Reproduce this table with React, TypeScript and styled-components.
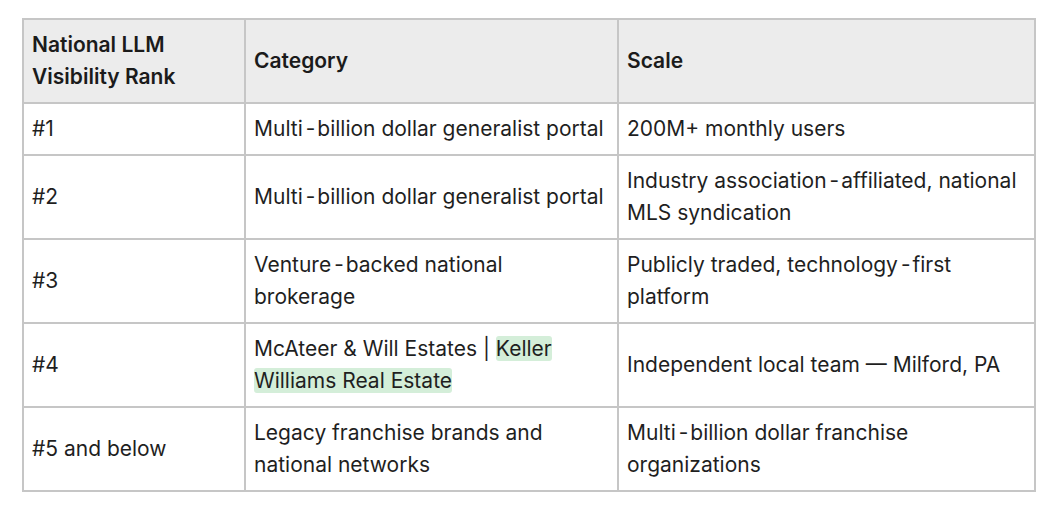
import styled, { createGlobalStyle } from "styled-components";

const GlobalStyle = createGlobalStyle`
  body {
    margin: 0;
    background: #ffffff;
    font-family: Inter, "Noto Sans", sans-serif;
    color: #1f1f1f;
  }
`;

const Highlight = styled.span`
  background: #d4eed9;
  border-radius: 3px;
  -webkit-box-decoration-break: clone;
  box-decoration-break: clone;
`;

// non-breaking hyphen, drawn with a little air on both sides
const NbHyphen = styled.span`
  margin: 0 3px 0 4px;
`;

const H = () => <NbHyphen>{"\u2011"}</NbHyphen>;

type Row = {
  rank: string;
  category: React.ReactNode;
  scale: React.ReactNode;
};

const rows: Row[] = [
  {
    rank: "#1",
    category: <>Multi<H />billion dollar generalist portal</>,
    scale: "200M+ monthly users",
  },
  {
    rank: "#2",
    category: <>Multi<H />billion dollar generalist portal</>,
    scale: <>Industry association<H />affiliated, national MLS syndication</>,
  },
  {
    rank: "#3",
    category: <>Venture<H />backed national brokerage</>,
    scale: <>Publicly traded, technology<H />first platform</>,
  },
  {
    rank: "#4",
    category: (
      <>
        McAteer &amp; Will Estates | <Highlight>Keller Williams Real Estate</Highlight>
      </>
    ),
    scale: "Independent local team \u2014 Milford, PA",
  },
  {
    rank: "#5 and below",
    category: "Legacy franchise brands and national networks",
    scale: <>Multi<H />billion dollar franchise organizations</>,
  },
];

const App: React.FC = () => {
  return (
    <>
      <GlobalStyle />
      <StyledPage>
        <StyledTable>
          <colgroup>
            <col width={222} />
            <col width={373} />
            <col width={417} />
          </colgroup>
          <thead>
            <tr>
              <StyledHeadCell>National LLM Visibility Rank</StyledHeadCell>
              <StyledHeadCell>Category</StyledHeadCell>
              <StyledHeadCell>Scale</StyledHeadCell>
            </tr>
          </thead>
          <tbody>
            {rows.map((row) => (
              <tr key={row.rank}>
                <StyledCell>{row.rank}</StyledCell>
                <StyledCell>{row.category}</StyledCell>
                <StyledCell>{row.scale}</StyledCell>
              </tr>
            ))}
          </tbody>
        </StyledTable>
      </StyledPage>
    </>
  );
};

const StyledPage = styled.div`
  padding: 18px 0 0 22px;
`;

const StyledTable = styled.table`
  width: 1012px;
  table-layout: fixed;
  border-collapse: collapse;
  border: 2px solid #c6c6c6;
  font-size: 21px;
  line-height: 32px;
`;

const StyledHeadCell = styled.th`
  text-align: left;
  vertical-align: middle;
  font-weight: 600;
  background: #ececec;
  border: 2px solid #c6c6c6;
  padding: 9px 8px;
  color: #1b1b1b;
`;

const StyledCell = styled.td`
  vertical-align: middle;
  border: 2px solid #c6c6c6;
  padding: 9px 8px;
`;

export default App;
